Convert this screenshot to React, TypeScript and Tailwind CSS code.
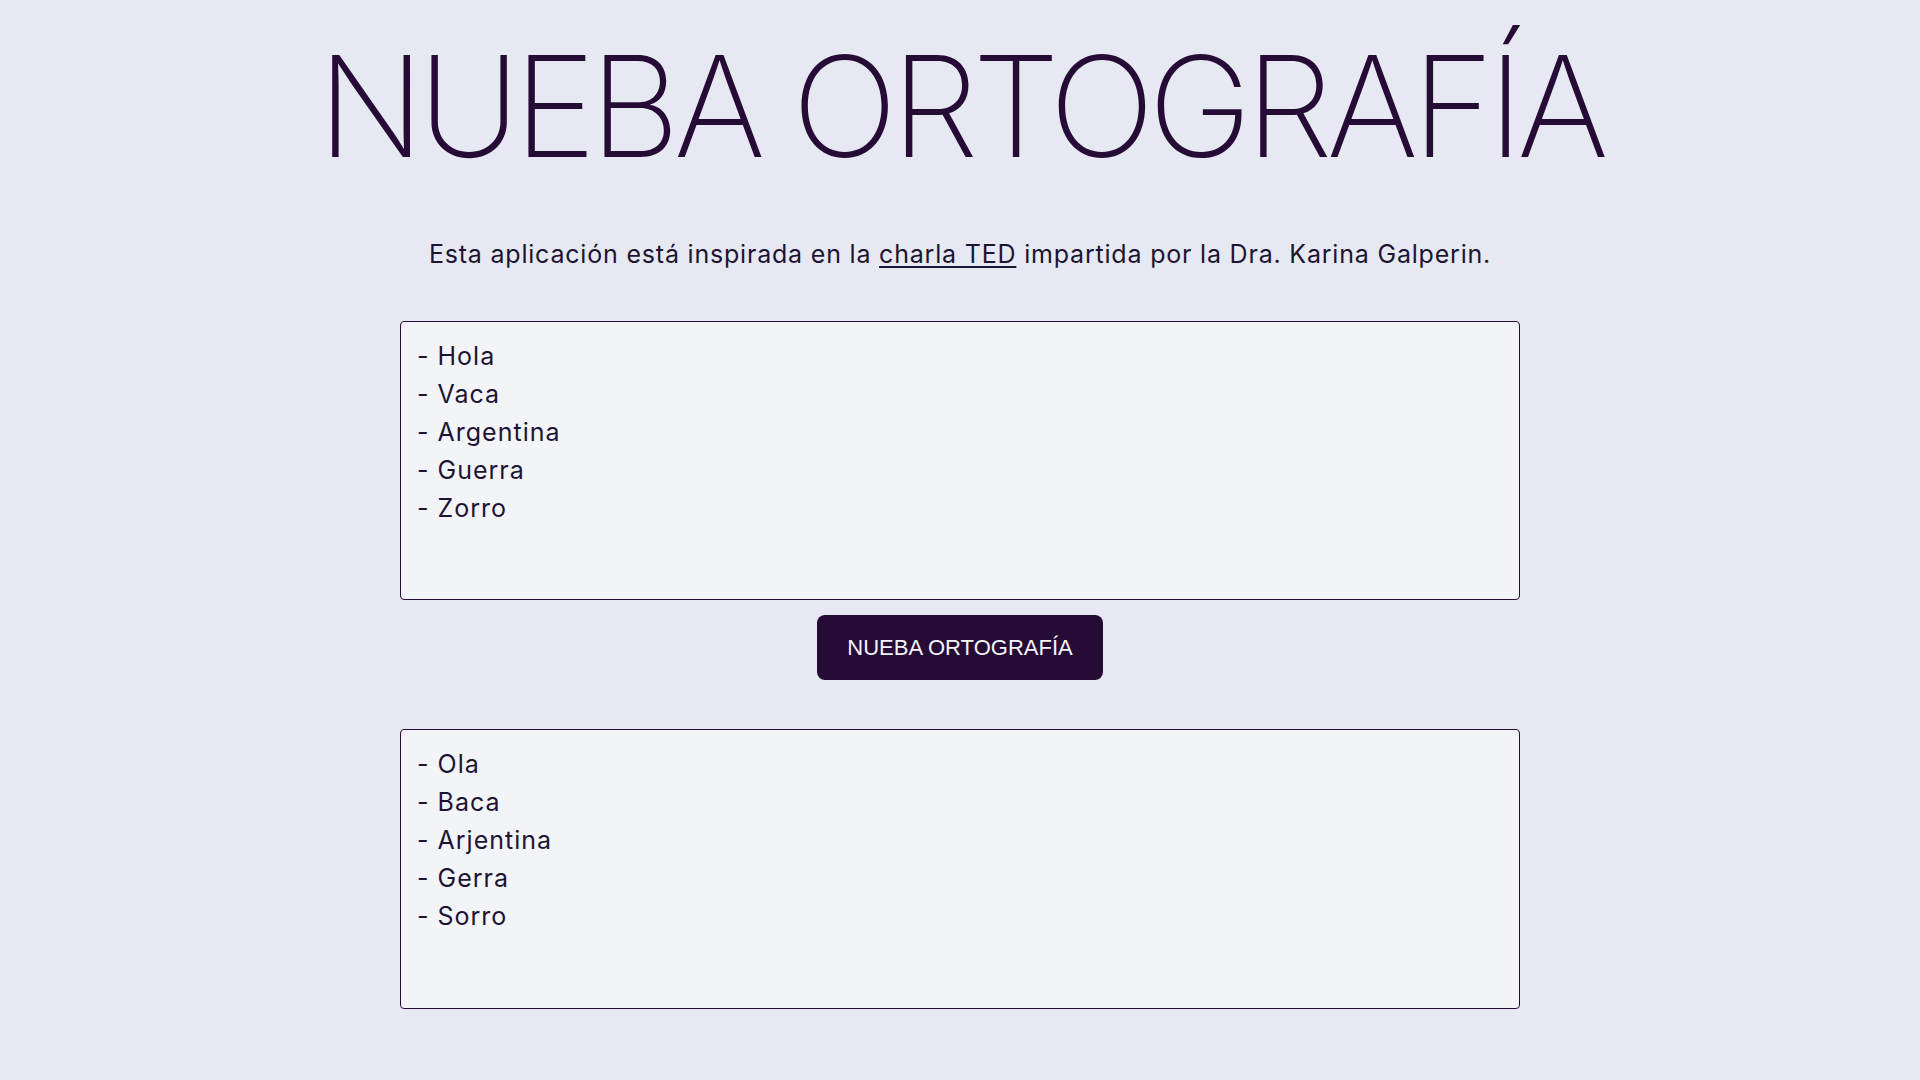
import React from 'react'

const original = ['- Hola', '- Vaca', '- Argentina', '- Guerra', '- Zorro'].join('\n')
const nueba = ['- Ola', '- Baca', '- Arjentina', '- Gerra', '- Sorro'].join('\n')

export default function App() {
  return (
    <main className="min-h-screen w-full bg-[#e6e9f1] flex flex-col items-center pb-16" style={{ fontFamily: 'Inter, "Open Sans", sans-serif' }}>
      {/* Title */}
      <h1 className="pt-[36px] text-[140px] leading-none font-extralight text-[#260b36] tracking-[-6.4px] whitespace-nowrap">
        NUEBA ORTOGRAFÍA
      </h1>

      <p className="mt-[59px] text-[25px] leading-[1.536] tracking-[0.8px] text-[#1d1433]">
        Esta aplicación está inspirada en la{' '}
        <a href="#" className="underline underline-offset-[3px] text-[#1d1433]">charla TED</a>{' '}
        impartida por la Dra. Karina Galperin.
      </p>

      {/* Input */}
      <textarea
        readOnly
        value={original}
        className="mt-12 w-[1120px] h-[279px] resize-none rounded border border-[#260b36] bg-[#f3f4f8] px-4 py-[15px] text-[25px] leading-[38px] tracking-[1px] text-[#1d1433] outline-none"
      />

      <button className="mt-[15px] h-[65px] w-[286px] rounded-lg bg-[#260b36] text-[22px] text-[#f3f4f8]" style={{ fontFamily: '"Liberation Sans", Arial, sans-serif' }}>
        NUEBA ORTOGRAFÍA
      </button>

      {/* Output */}
      <textarea
        readOnly
        value={nueba}
        className="mt-[49px] w-[1120px] h-[280px] resize-none rounded border border-[#260b36] bg-[#f3f4f8] px-4 py-[15px] text-[25px] leading-[38px] tracking-[1px] text-[#1d1433] outline-none"
      />
    </main>
  )
}
